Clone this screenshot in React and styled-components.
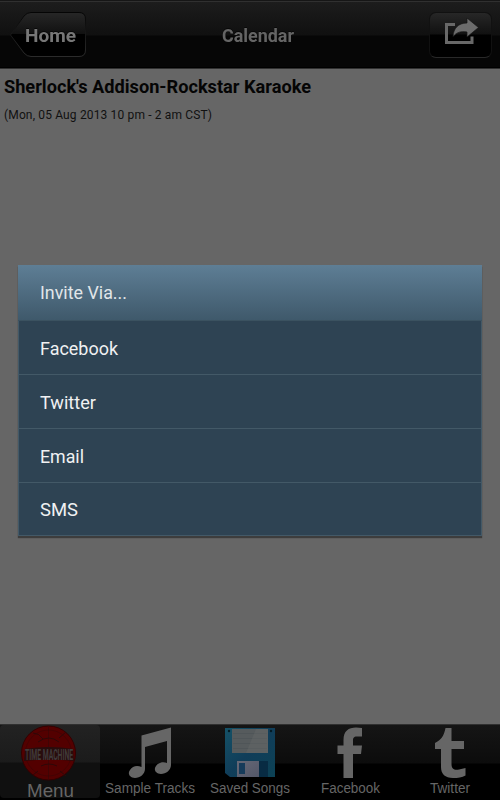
import React, { useState } from "react";
import styled, { createGlobalStyle } from "styled-components";

const inviteOptions = [
  { label: "Facebook", width: 78 },
  { label: "Twitter", width: 56 },
  { label: "Email", width: 44 },
  { label: "SMS", width: 38 },
];

// Text stretched to a fixed advance so labels keep their size on every font build
const Label = ({ children, width, size, color, weight = 400, family = "Roboto", spacing = "spacingAndGlyphs", shadow }) => (
  <LabelSvg width={width} height={size * 1.25} $shadow={shadow}>
    <text
      x="0"
      y={size}
      textLength={width}
      lengthAdjust={spacing}
      fontFamily={`${family}, "Liberation Sans", sans-serif`}
      fontSize={size}
      fontWeight={weight}
      fill={color}
    >
      {children}
    </text>
  </LabelSvg>
);

const HomeShape = () => (
  <svg width="78" height="48" viewBox="0 0 78 48">
    <defs>
      <linearGradient id="homeFill" x1="0" y1="0" x2="0" y2="1">
        <stop offset="0" stopColor="#272727" />
        <stop offset="0.48" stopColor="#111" />
        <stop offset="0.49" stopColor="#000" />
        <stop offset="1" stopColor="#000" />
      </linearGradient>
      <linearGradient id="homeEdge" x1="0" y1="0" x2="0" y2="1">
        <stop offset="0" stopColor="#050505" />
        <stop offset="1" stopColor="#2b2b2b" />
      </linearGradient>
    </defs>
    <path
      d="M1.5 24 L15 5 Q18 1.5 22 1.5 H70 Q76.5 1.5 76.5 8 V39 Q76.5 45.5 70 45.5 H22 Q18 45.5 15 42 Z"
      fill="url(#homeFill)"
      stroke="url(#homeEdge)"
    />
  </svg>
);

const ShareIcon = () => (
  <svg width="36" height="28" viewBox="0 0 36 28">
    <path d="M12 6.5 H3.5 V24.5 H29 V18.5" fill="none" stroke="#686868" strokeWidth="3" />
    <path d="M24 0 L35.5 9.5 L24 19 V14 C18 13 14 14 10 18.5 C10.5 10.5 15 5 24 5 Z" fill="#6c6c6c" stroke="#151515" strokeWidth="0.7" />
  </svg>
);

const MachineIcon = () => (
  <svg width="58" height="56" viewBox="0 0 58 56">
    <circle cx="27.5" cy="28" r="27" fill="#530000" stroke="#300" />
    <g fill="none" stroke="#2d0808" strokeWidth="1">
      <path d="M12 8 Q18 8 22 14 M38 13 L45 7 M17 17 Q28 9 38 17 M20 41 Q28 37 36 41 M12 50 L17 46 M39 46 L45 51" />
      <path d="M27.5 2 V55" opacity="0.5" />
      <circle cx="27.5" cy="28" r="23" opacity="0.4" />
    </g>
    <path d="M4 24 Q28 20 52 24 L53 36 Q28 33 3 36 Z" fill="#280c0c" />
    <text
      transform="translate(4 34.5) scale(1 2)"
      textLength="48"
      lengthAdjust="spacingAndGlyphs"
      fontFamily="Roboto, sans-serif"
      fontWeight="700"
      fontSize="7"
      fill="#403b3b"
    >
      TIME MACHINE
    </text>
  </svg>
);

const NoteIcon = () => (
  <svg width="50" height="54" viewBox="0 0 50 54">
    <path
      d="M16.5 10.5 L46 2.5 V40 C46 45 41 49 36 49 C30 49 28.5 44 31 41 C33.5 37.5 38 36.5 42 38 V16 L20 22 V44 C20 49 15 53 10 53 C4 53 2.5 48 5 45 C7.5 41 12 40 16.5 42 Z"
      fill="#666"
    />
  </svg>
);

const FloppyIcon = () => (
  <svg width="50" height="54" viewBox="0 0 50 54">
    <defs>
      <linearGradient id="disk" x1="0" y1="0" x2="1" y2="1">
        <stop offset="0" stopColor="#155267" />
        <stop offset="0.5" stopColor="#103d59" />
        <stop offset="1" stopColor="#0c4255" />
      </linearGradient>
      <linearGradient id="shutter" x1="0" y1="0" x2="1" y2="1">
        <stop offset="0" stopColor="#666876" />
        <stop offset="1" stopColor="#535768" />
      </linearGradient>
    </defs>
    <path d="M0 3 H50 V52 H5 L0 48 Z" fill="url(#disk)" />
    <path d="M7 4 H43 V28 H7 Z" fill="#565b5d" />
    <path d="M8 8.5 H42 M8 13.5 H42 M8 18.5 H42 M8 23.5 H42" stroke="#4f5558" />
    <path d="M31 4 H43 V28 H21 Z" fill="#696c6d" opacity="0.35" />
    <path d="M12 36 H34 V52 H12 Z" fill="url(#shutter)" />
    <path d="M34 36 H43 V52 H34 Z" fill="#082b43" />
    <path d="M14 38 H20 V49 H14 Z" fill="#163b5a" />
    <circle cx="4" cy="6" r="1.2" fill="#041b24" />
    <circle cx="46" cy="6" r="1.2" fill="#041b24" />
  </svg>
);

const FacebookIcon = () => (
  <svg width="50" height="54" viewBox="0 0 50 54">
    <path d="M18.5 53 V29 H12.5 V20.5 H18.5 V15 C18.5 6 23.5 2.5 31 2.5 L37 3 V11.5 H32 C28.5 11.5 28 13 28 16 V20.5 H37 L36 29 H28 V53 Z" fill="#666" />
  </svg>
);

const TwitterIcon = () => (
  <svg width="50" height="54" viewBox="0 0 50 54">
    <path d="M20.5 3 H26.5 V16 H39 V24 H26.5 V39 C26.5 45 30 45 34 44.5 L40.5 43 V50.5 C37 52.5 33 53 28 53 C20 53 16 49 16 42 V24 H10 V18 C16 15 19 11 20.5 3 Z" fill="#666" />
  </svg>
);

const tabs = [
  { label: "Menu", width: 47, size: 19, icon: <MachineIcon /> },
  { label: "Sample Tracks", width: 90, size: 14, icon: <NoteIcon /> },
  { label: "Saved Songs", width: 80, size: 14, icon: <FloppyIcon /> },
  { label: "Facebook", width: 59, size: 14, icon: <FacebookIcon /> },
  { label: "Twitter", width: 40, size: 14, icon: <TwitterIcon /> },
];

const App = () => {
  const [activeTab, setActiveTab] = useState("Menu");

  return (
    <Screen>
      <GlobalStyle />
      <Header>
        <HomeButton>
          <HomeShape />
          <HomeText>
            <Label width={51} size={19} weight={700} color="#777" shadow>Home</Label>
          </HomeText>
        </HomeButton>
        <Title>
          <Label width={72} size={18.5} weight={700} color="#656565" shadow>Calendar</Label>
        </Title>
        <ShareButton aria-label="Share">
          <ShareIcon />
        </ShareButton>
      </Header>

      <Content>
        <Label width={307} size={18.5} weight={700} color="#050505">
          Sherlock's Addison-Rockstar Karaoke
        </Label>
        <Label width={208} size={12} spacing="spacing" color="#111">
          (Mon, 05 Aug 2013 10 pm - 2 am CST)
        </Label>
      </Content>

      <TabBar>
        {tabs.map((tab) => (
          <Tab
            key={tab.label}
            $active={tab.label === activeTab}
            onClick={() => setActiveTab(tab.label)}
          >
            {tab.icon}
            <Label width={tab.width} size={tab.size} family="Liberation Sans" color="#666">
              {tab.label}
            </Label>
          </Tab>
        ))}
      </TabBar>

      <Dialog role="dialog">
        <DialogHeader>
          <Label width={87} size={18.5} color="#e1e6e9">Invite Via...</Label>
        </DialogHeader>
        {inviteOptions.map((option) => (
          <Option key={option.label}>
            <Label width={option.width} size={19} color="#f0f1f2">{option.label}</Label>
          </Option>
        ))}
      </Dialog>
    </Screen>
  );
};

export default App;

const GlobalStyle = createGlobalStyle`
  * {
    box-sizing: border-box;
  }

  body {
    margin: 0;
    background: #666;
  }

  button {
    padding: 0;
    border: 0;
    background: none;
  }
`;

const LabelSvg = styled.svg`
  display: block;
  flex-shrink: 0;
  overflow: visible;
  filter: ${(props) => (props.$shadow ? "drop-shadow(0 -1px 0 #080808)" : "none")};
`;

const Screen = styled.div`
  position: relative;
  display: flex;
  flex-direction: column;
  width: 500px;
  height: 800px;
  overflow: hidden;
  background: #666;
`;

const Header = styled.header`
  display: grid;
  grid-template-columns: 1fr auto 1fr;
  align-items: center;
  height: 69px;
  padding: 1px 8px 0 9px;
  border-top: 1px solid #161616;
  border-bottom: 1px solid #303030;
  box-shadow: inset 0 1px #303030, inset 0 -1px #000;
  background: linear-gradient(#1d1d1d, #101010 34px, #060606 35px, #060606);
`;

const HomeButton = styled.button`
  display: grid;
  justify-self: start;
  align-items: center;

  & > * {
    grid-area: 1 / 1;
  }
`;

const HomeText = styled.span`
  padding: 0 0 1px 16px;
`;

const Title = styled.div`
  padding: 0 0 1px 14px;
`;

const ShareButton = styled.button`
  display: flex;
  justify-self: end;
  justify-content: center;
  width: 63px;
  height: 46px;
  padding-top: 5px;
  border: 1px solid #111;
  border-bottom-color: #292929;
  border-radius: 7px;
  background: linear-gradient(#272727, #111 21px, #000 22px, #000);
`;

const Content = styled.main`
  display: flex;
  flex: 1;
  flex-direction: column;
  gap: 10px;
  padding: 5px 4px;
`;

const TabBar = styled.nav`
  display: grid;
  grid-template-columns: repeat(5, 1fr);
  height: 76px;
  border-top: 1px solid #303030;
  background: linear-gradient(#151515, #0c0c0c 38px, #000 39px, #000);
`;

const Tab = styled.button`
  display: flex;
  flex-direction: column;
  align-items: center;
  height: 73px;
  border-radius: 4px;
  background: ${(props) => props.$active ? "linear-gradient(#222, #1b1b1b 37px, #101010 38px, #101010)" : "none"};

  & > svg {
    flex-shrink: 0;
  }

  & > svg:last-child {
    margin-top: ${(props) => (props.$active ? "-3px" : "0")};
  }
`;

const Dialog = styled.section`
  position: absolute;
  top: 265px;
  left: 18px;
  width: 464px;
  height: 271px;
  background: #2e4353;
  box-shadow: 0 2px 1px #3d3d3d;
`;

const DialogHeader = styled.div`
  display: flex;
  align-items: center;
  height: 56px;
  padding: 0 21.5px 2px;
  border-bottom: 1px solid #3b5260;
  background: linear-gradient(#5e7e95, #3f596b);
`;

const Option = styled.div`
  display: flex;
  align-items: center;
  height: 54px;
  padding: 0 20.5px;
  border: solid #435967;
  border-width: 0 1px 1px;

  &:last-child {
    height: 53px;
  }
`;
